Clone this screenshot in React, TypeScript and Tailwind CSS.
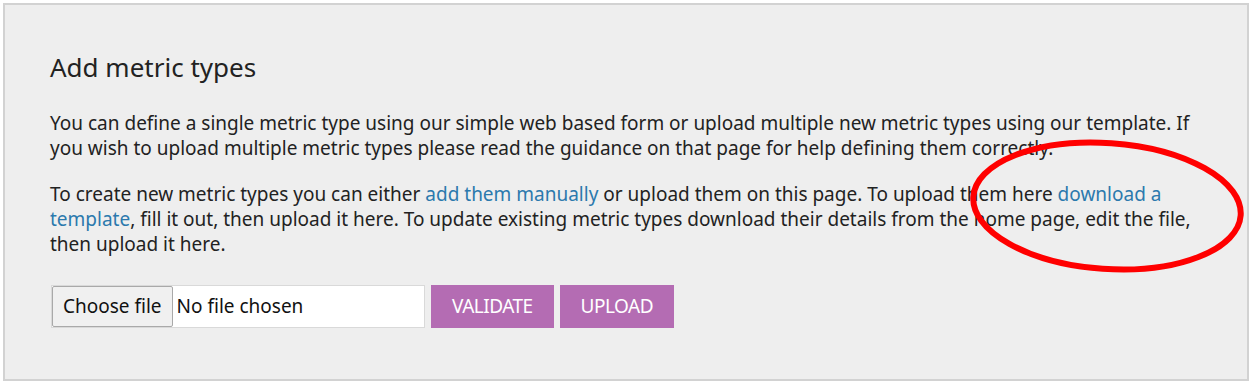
export default function App() {
  return (
    <div className="relative w-[1252px] h-[386px] bg-white p-[3px] overflow-hidden" style={{ fontFamily: '"Noto Sans", sans-serif' }}>
      <div className="h-[378px] w-[1246px] border-2 border-[#d2d2d2] bg-[#eeeeee] pl-[45px] pr-[40px] pt-[46px] text-[#222222]">
        <h2 className="text-[26px] leading-[32px]">Add metric types</h2>
        <p className="mt-[28px] text-[19px] leading-[25px]">
          You can define a single metric type using our simple web based form or upload multiple new metric types using our template. If
          you wish to upload multiple metric types please read the guidance on that page for help defining them correctly.
        </p>
        <p className="mt-[21px] text-[19px] leading-[25px]">
          To create new metric types you can either <a className="text-[#2b79ad]">add them manually</a> or upload them on this page. To upload them here{' '}
          <a className="text-[#2b79ad]">download a template</a>, fill it out, then upload it here. To update existing metric types download their details from the home page, edit the file,
          then upload it here.
        </p>
        <div className="mt-[28px] ml-[1px] flex items-stretch gap-[6px] h-[43px] text-[19px]">
          <div className="flex w-[374px] border border-[#d9d9d9] bg-white">
            <span className="flex items-center px-[10px] bg-[#f0f0f0] border border-[#a9a9a9] rounded-[2px] text-[#111]">Choose file</span>
            <span className="flex items-center pl-[4px] text-[#111]">No file chosen</span>
          </div>
          <button className="bg-[#b46cb3] px-[21px] text-white text-[19px] tracking-[-0.5px]">VALIDATE</button>
          <button className="bg-[#b46cb3] px-[21px] text-white text-[19px] tracking-[-0.5px]">UPLOAD</button>
        </div>
      </div>
      <svg className="absolute left-0 top-0 pointer-events-none" width="1252" height="386">
        <ellipse cx="1107" cy="206" rx="134" ry="63" fill="none" stroke="#ff0000" strokeWidth="6" transform="rotate(4 1107 206)" />
      </svg>
    </div>
  );
}
